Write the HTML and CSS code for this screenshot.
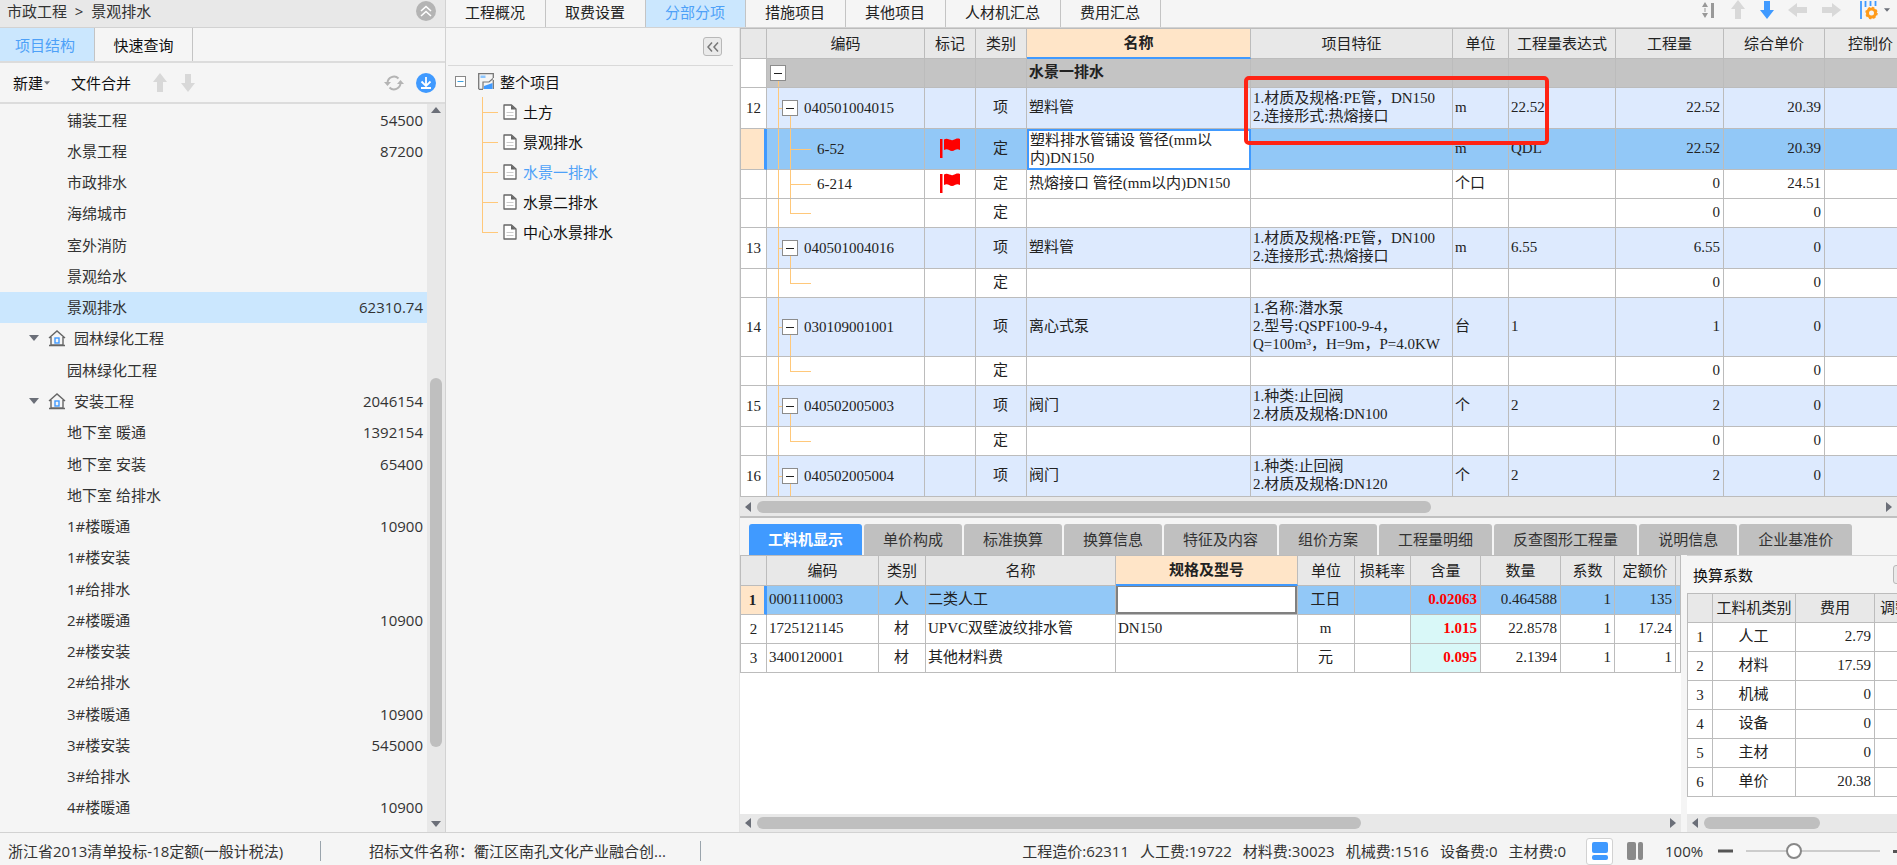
FILE: index.html
```html
<!DOCTYPE html>
<html lang="zh-CN">
<head>
<meta charset="utf-8">
<title>市政工程 - 景观排水</title>
<link rel="stylesheet" href="styles.css">
</head>
<body>
<svg class="defs" aria-hidden="true">
  <symbol id="i-up" viewBox="0 0 16 20"><path d="M8 0 15 9H11V19H5V9H1Z" fill="currentColor"/></symbol>
  <symbol id="i-down" viewBox="0 0 16 20"><path d="M8 19 15 10H11V1H5V10H1Z" fill="currentColor"/></symbol>
  <symbol id="i-left" viewBox="0 0 20 16"><path d="M0 8 9 1V5H19V11H9V15Z" fill="currentColor"/></symbol>
  <symbol id="i-right" viewBox="0 0 20 16"><path d="M20 8 11 1V5H1V11H11V15Z" fill="currentColor"/></symbol>
  <symbol id="i-home" viewBox="0 0 18 18"><path d="M1 9 9 2 17 9M3 8V16H15V8M1 16.5H17" fill="none" stroke="#666" stroke-width="1.4"/><rect x="7" y="9" width="4" height="5" fill="none" stroke="#409aff" stroke-width="1.4"/></symbol>
  <symbol id="i-doc" viewBox="0 0 14 16"><path d="M1 1H8.5L13 5V15H1Z" fill="#fff" stroke="#666" stroke-width="1.3" stroke-linejoin="round"/><path d="M8 1V5.5H13Z" fill="#666"/><path d="M3.5 8.5H10.500M3.500 11.500H10.500" stroke="#ccc"/></symbol>
  <symbol id="i-flag" viewBox="0 0 20 20"><path d="M0 1H2.500V20H0Z" fill="#f00"/><path d="M4 1.500C8-.5 10 3 13 2 16 1 17 0 20 1V12C16 10 15 13 12 13 9 13 8 10 4 12Z" fill="#f00"/></symbol>
  <symbol id="t-left" viewBox="0 0 6 10"><path d="M6 0V10L0 5Z" fill="#6b6f78"/></symbol>
  <symbol id="t-right" viewBox="0 0 6 10"><path d="M0 0V10L6 5Z" fill="#6b6f78"/></symbol>
  <symbol id="t-up" viewBox="0 0 10 6"><path d="M0 6H10L5 0Z" fill="#6b6f78"/></symbol>
  <symbol id="t-down" viewBox="0 0 10 6"><path d="M0 0H10L5 6Z" fill="#6b6f78"/></symbol>
</svg>

<div class="app">
  <aside class="side">
    <div class="crumb"><span>市政工程&nbsp; &gt; &nbsp;景观排水</span>
      <button class="plain" aria-label="收起"><svg width="20" height="20" viewBox="0 0 20 20"><circle cx="10" cy="10" r="10" fill="#b4b4b4"/><path d="M5 10 10 5.500 15 10M5 15 10 10.500 15 15" fill="none" stroke="#fff" stroke-width="1.6"/></svg></button>
    </div>
    <div class="side-tabs">
      <button class="on">项目结构</button><button>快速查询</button>
    </div>
    <div class="side-tools">
      <button class="plain new">新建<svg width="6" height="4"><use href="#t-down"/></svg></button>
      <button class="plain merge">文件合并</button>
      <button class="plain dim" aria-label="上移"><svg width="16" height="20"><use href="#i-up"/></svg></button>
      <button class="plain dim" aria-label="下移"><svg width="16" height="20"><use href="#i-down"/></svg></button>
      <span class="grow"></span>
      <button class="plain refresh" aria-label="刷新"><svg width="20" height="18" viewBox="0 0 20 18"><path d="M3.500 9A6.500 6.500 0 0 1 14.500 4.500M16.500 9A6.500 6.500 0 0 1 5.500 13.500" fill="none" stroke="#b4b4b4" stroke-width="2"/><path d="M0 8H7L3.500 12ZM13 10H20L16.500 6Z" fill="#b4b4b4"/></svg></button>
      <button class="plain" aria-label="下载"><svg width="20" height="20" viewBox="0 0 20 20"><circle cx="10" cy="10" r="10" fill="#409aff"/><path d="M10 4V12M5.500 8.500 10 13 14.500 8.500M5 15H15" fill="none" stroke="#fff" stroke-width="1.8"/></svg></button>
    </div>
    <div class="side-body">
      <ul class="projects">
        <li><span>铺装工程</span><b>54500</b></li>
        <li><span>水景工程</span><b>87200</b></li>
        <li><span>市政排水</span></li>
        <li><span>海绵城市</span></li>
        <li><span>室外消防</span></li>
        <li><span>景观给水</span></li>
        <li class="on"><span>景观排水</span><b>62310.74</b></li>
        <li class="group"><svg width="10" height="6"><use href="#t-down"/></svg><svg width="18" height="18"><use href="#i-home"/></svg><span>园林绿化工程</span></li>
        <li><span>园林绿化工程</span></li>
        <li class="group"><svg width="10" height="6"><use href="#t-down"/></svg><svg width="18" height="18"><use href="#i-home"/></svg><span>安装工程</span><b>2046154</b></li>
        <li><span>地下室 暖通</span><b>1392154</b></li>
        <li><span>地下室 安装</span><b>65400</b></li>
        <li><span>地下室 给排水</span></li>
        <li><span>1#楼暖通</span><b>10900</b></li>
        <li><span>1#楼安装</span></li>
        <li><span>1#给排水</span></li>
        <li><span>2#楼暖通</span><b>10900</b></li>
        <li><span>2#楼安装</span></li>
        <li><span>2#给排水</span></li>
        <li><span>3#楼暖通</span><b>10900</b></li>
        <li><span>3#楼安装</span><b>545000</b></li>
        <li><span>3#给排水</span></li>
        <li><span>4#楼暖通</span><b>10900</b></li>
      </ul>
      <div class="vbar"><svg width="10" height="6"><use href="#t-up"/></svg><span class="before"></span><i></i><span class="after"></span><svg width="10" height="6"><use href="#t-down"/></svg></div>
    </div>
  </aside>

  <main class="main">
    <div class="main-tabs">
      <button>工程概况</button><button>取费设置</button><button class="on">分部分项</button><button>措施项目</button><button>其他项目</button><button>人材机汇总</button><button>费用汇总</button>
      <div class="main-tools">
        <button class="plain" aria-label="行高"><svg width="16" height="18" viewBox="0 0 16 18"><path d="M4 1 7 6H1ZM4 17 7 12H1ZM3.500 7H4.500V11H3.500ZM10 2H13V17H10Z" fill="#999"/></svg></button>
        <button class="plain dim" aria-label="上移"><svg width="16" height="20"><use href="#i-up"/></svg></button>
        <button class="plain blue" aria-label="下移"><svg width="16" height="20"><use href="#i-down"/></svg></button>
        <button class="plain dim" aria-label="左移"><svg width="20" height="16"><use href="#i-left"/></svg></button>
        <button class="plain dim" aria-label="右移"><svg width="20" height="16"><use href="#i-right"/></svg></button>
        <button class="plain cols" aria-label="列设置"><svg width="18" height="20" viewBox="0 0 18 20"><path d="M1 1V19M5.500 1V7M10.500 1V6M15.500 1V6" stroke="#409aff" stroke-width="1.8"/><circle cx="11.500" cy="13" r="4" fill="none" stroke="#ff9b1a" stroke-width="3"/><circle cx="11.500" cy="13" r="5.500" fill="none" stroke="#ff9b1a" stroke-width="1.500" stroke-dasharray="2.300 2"/></svg><svg width="6" height="4"><use href="#t-down"/></svg></button>
      </div>
    </div>

    <div class="split">
      <nav class="outline">
        <div class="outline-head"><button aria-label="收起目录"><svg width="12" height="10" viewBox="0 0 12 10"><path d="M5 0.500 1 5 5 9.500M11 0.500 7 5 11 9.500" fill="none" stroke="#777" stroke-width="1.500"/></svg></button></div>
        <div class="root"><svg width="11" height="11" viewBox="0 0 11 11"><rect x=".5" y=".5" width="10" height="10" fill="#fff" stroke="#888"/><path d="M2.500 5.500H8.500" stroke="#3aa0e0"/></svg>
          <svg width="16" height="17" viewBox="0 0 16 17"><path d="M.7 16V.7H15.300V5M.7 16.300H5M15.300 7V16" fill="none" stroke="#777" stroke-width="1.300"/><rect x="2.500" y="2.500" width="5" height="2.500" fill="#8cc6ff"/><path d="M5 16V9H11L15 5.500" fill="none" stroke="#777" stroke-width="1.200"/><path d="M6 16V13L14.500 10V16Z" fill="#409aff"/></svg><span>整个项目</span></div>
        <ul>
          <li><svg width="14" height="16"><use href="#i-doc"/></svg>土方</li>
          <li><svg width="14" height="16"><use href="#i-doc"/></svg>景观排水</li>
          <li class="on"><svg width="14" height="16"><use href="#i-doc"/></svg>水景一排水</li>
          <li><svg width="14" height="16"><use href="#i-doc"/></svg>水景二排水</li>
          <li><svg width="14" height="16"><use href="#i-doc"/></svg>中心水景排水</li>
        </ul>
      </nav>

      <section class="work">
        <div class="bill">
          <table class="grid">
            <colgroup><col class="w26"><col class="w158"><col class="w51"><col class="w51"><col class="w224"><col class="w202"><col class="w56"><col class="w107"><col class="w108"><col class="w101"><col></colgroup>
            <thead><tr class="h30"><th></th><th>编码</th><th>标记</th><th>类别</th><th class="cur">名称</th><th>项目特征</th><th>单位</th><th>工程量表达式</th><th>工程量</th><th>综合单价</th><th>控制价</th></tr></thead>
            <tbody>
              <tr class="h29 section"><th></th><td class="code top"><div><button class="box" aria-label="折叠"></button></div></td><td></td><td></td><td class="name">水景一排水</td><td></td><td></td><td></td><td></td><td></td><td></td></tr>
              <tr class="h41 item"><th>12</th><td class="code"><div><button class="box" aria-label="折叠"></button>040501004015</div></td><td></td><td class="c">项</td><td>塑料管</td><td class="multi">1.材质及规格:PE管，DN150<br>2.连接形式:热熔接口</td><td>m</td><td>22.52</td><td class="r">22.52</td><td class="r">20.39</td><td></td></tr>
              <tr class="h41 sel"><th></th><td class="code child"><div>6-52</div></td><td class="c"><svg width="20" height="20"><use href="#i-flag"/></svg></td><td class="c">定</td><td class="multi edit">塑料排水管铺设 管径(mm以<br>内)DN150</td><td></td><td>m</td><td>QDL</td><td class="r">22.52</td><td class="r">20.39</td><td></td></tr>
              <tr class="h29"><th></th><td class="code child"><div>6-214</div></td><td class="c"><svg width="20" height="20"><use href="#i-flag"/></svg></td><td class="c">定</td><td>热熔接口 管径(mm以内)DN150</td><td></td><td>个口</td><td></td><td class="r">0</td><td class="r">24.51</td><td></td></tr>
              <tr class="h29"><th></th><td class="code last"></td><td></td><td class="c">定</td><td></td><td></td><td></td><td></td><td class="r">0</td><td class="r">0</td><td></td></tr>
              <tr class="h41 item"><th>13</th><td class="code"><div><button class="box" aria-label="折叠"></button>040501004016</div></td><td></td><td class="c">项</td><td>塑料管</td><td class="multi">1.材质及规格:PE管，DN100<br>2.连接形式:热熔接口</td><td>m</td><td>6.55</td><td class="r">6.55</td><td class="r">0</td><td></td></tr>
              <tr class="h29"><th></th><td class="code last"></td><td></td><td class="c">定</td><td></td><td></td><td></td><td></td><td class="r">0</td><td class="r">0</td><td></td></tr>
              <tr class="h59 item"><th>14</th><td class="code"><div><button class="box" aria-label="折叠"></button>030109001001</div></td><td></td><td class="c">项</td><td>离心式泵</td><td class="multi">1.名称:潜水泵<br>2.型号:QSPF100-9-4，<br>Q=100m³，H=9m，P=4.0KW</td><td>台</td><td>1</td><td class="r">1</td><td class="r">0</td><td></td></tr>
              <tr class="h29"><th></th><td class="code last"></td><td></td><td class="c">定</td><td></td><td></td><td></td><td></td><td class="r">0</td><td class="r">0</td><td></td></tr>
              <tr class="h41 item"><th>15</th><td class="code"><div><button class="box" aria-label="折叠"></button>040502005003</div></td><td></td><td class="c">项</td><td>阀门</td><td class="multi">1.种类:止回阀<br>2.材质及规格:DN100</td><td>个</td><td>2</td><td class="r">2</td><td class="r">0</td><td></td></tr>
              <tr class="h29"><th></th><td class="code last"></td><td></td><td class="c">定</td><td></td><td></td><td></td><td></td><td class="r">0</td><td class="r">0</td><td></td></tr>
              <tr class="h41 item"><th>16</th><td class="code"><div><button class="box" aria-label="折叠"></button>040502005004</div></td><td></td><td class="c">项</td><td>阀门</td><td class="multi">1.种类:止回阀<br>2.材质及规格:DN120</td><td>个</td><td>2</td><td class="r">2</td><td class="r">0</td><td></td></tr>
            </tbody>
          </table>
          <div class="mark"></div>
        </div>
        <div class="hbar bill-bar"><svg width="6" height="10"><use href="#t-left"/></svg><i></i><span class="grow"></span><svg width="6" height="10"><use href="#t-right"/></svg></div>

        <div class="detail-tabs">
          <button class="on">工料机显示</button><button>单价构成</button><button>标准换算</button><button>换算信息</button><button>特征及内容</button><button>组价方案</button><button>工程量明细</button><button>反查图形工程量</button><button>说明信息</button><button>企业基准价</button>
        </div>
        <div class="detail">
          <div class="pane res">
            <div class="scroll">
              <table class="grid">
                <colgroup><col class="w26"><col class="w112"><col class="w47"><col class="w190"><col class="w182"><col class="w57"><col class="w56"><col class="w70"><col class="w80"><col class="w54"><col class="w61"><col></colgroup>
                <thead><tr class="h30"><th></th><th>编码</th><th>类别</th><th>名称</th><th class="cur">规格及型号</th><th>单位</th><th>损耗率</th><th>含量</th><th>数量</th><th>系数</th><th>定额价</th><th></th></tr></thead>
                <tbody>
                  <tr class="h29 sel"><th>1</th><td>0001110003</td><td class="c">人</td><td>二类人工</td><td class="field"><input type="text" aria-label="规格及型号"></td><td class="c">工日</td><td></td><td class="r qty">0.02063</td><td class="r">0.464588</td><td class="r">1</td><td class="r">135</td><td></td></tr>
                  <tr class="h29"><th>2</th><td>1725121145</td><td class="c">材</td><td>UPVC双壁波纹排水管</td><td>DN150</td><td class="c">m</td><td></td><td class="r qty">1.015</td><td class="r">22.8578</td><td class="r">1</td><td class="r">17.24</td><td></td></tr>
                  <tr class="h29"><th>3</th><td>3400120001</td><td class="c">材</td><td>其他材料费</td><td></td><td class="c">元</td><td></td><td class="r qty">0.095</td><td class="r">2.1394</td><td class="r">1</td><td class="r">1</td><td></td></tr>
                </tbody>
              </table>
            </div>
            <div class="hbar res-bar"><svg width="6" height="10"><use href="#t-left"/></svg><i></i><span class="grow"></span><svg width="6" height="10"><use href="#t-right"/></svg></div>
          </div>
          <div class="pane coef">
            <div class="coef-head"><span>换算系数</span><button aria-label="展开"><svg width="12" height="10" viewBox="0 0 12 10"><path d="M1 .5 5 5 1 9.500M7 .5 11 5 7 9.500" fill="none" stroke="#777" stroke-width="1.500"/></svg></button></div>
            <div class="scroll">
              <table class="grid">
                <colgroup><col class="w25"><col class="w83"><col class="w79"><col></colgroup>
                <thead><tr class="h29"><th></th><th>工料机类别</th><th>费用</th><th class="l">调整</th></tr></thead>
                <tbody>
                  <tr class="h29"><th>1</th><td class="c">人工</td><td class="r">2.79</td><td></td></tr>
                  <tr class="h29"><th>2</th><td class="c">材料</td><td class="r">17.59</td><td></td></tr>
                  <tr class="h29"><th>3</th><td class="c">机械</td><td class="r">0</td><td></td></tr>
                  <tr class="h29"><th>4</th><td class="c">设备</td><td class="r">0</td><td></td></tr>
                  <tr class="h29"><th>5</th><td class="c">主材</td><td class="r">0</td><td></td></tr>
                  <tr class="h29"><th>6</th><td class="c">单价</td><td class="r">20.38</td><td></td></tr>
                </tbody>
              </table>
            </div>
            <div class="hbar coef-bar"><svg width="6" height="10"><use href="#t-left"/></svg><i></i></div>
          </div>
        </div>
      </section>
    </div>
  </main>
</div>

<footer class="status">
  <span class="std">浙江省2013清单投标-18定额(一般计税法)</span>
  <span class="file">招标文件名称：衢江区南孔文化产业融合创...</span>
  <div class="totals"><span>工程造价:62311</span><span>人工费:19722</span><span>材料费:30023</span><span>机械费:1516</span><span>设备费:0</span><span>主材费:0</span></div>
  <button class="view on" aria-label="上下布局"><svg width="16" height="18" viewBox="0 0 16 18"><rect width="16" height="11" rx="2" fill="#409aff"/><rect y="13" width="16" height="5" rx="2" fill="#409aff"/></svg></button>
  <button class="view" aria-label="左右布局"><svg width="16" height="18" viewBox="0 0 16 18"><rect width="9" height="18" rx="2" fill="#8a8a8a"/><rect x="11" width="5" height="18" rx="2" fill="#8a8a8a"/></svg></button>
  <label class="zoom" for="zoom">100%</label>
  <button class="plain step" aria-label="缩小"><svg width="15" height="4"><path d="M0 2H15" stroke="#555" stroke-width="3"/></svg></button>
  <input id="zoom" class="slider" type="range" min="0" max="100" value="34">
  <button class="plain step" aria-label="放大"><svg width="15" height="15"><path d="M0 7.500H15M7.500 0V15" stroke="#555" stroke-width="3"/></svg></button>
</footer>
</body>
</html>
```
FILE: styles.css
```css
* { box-sizing: border-box; }
body {
  margin: 0;
  height: 100vh;
  display: flex;
  flex-direction: column;
  overflow: hidden;
  background: #f5f5f5;
  color: #333;
  font: 15px/20px "Open Sans", "Noto Sans CJK SC", sans-serif;
}
button, input { font: inherit; color: inherit; margin: 0; }
button { border: 0; padding: 0; background: none; white-space: nowrap; }
svg { display: block; flex: none; }
ul { list-style: none; margin: 0; padding: 0; }
.defs { width: 0; height: 0; position: absolute; }
.grow { flex: 1; }
.plain { display: flex; align-items: center; }
.dim { color: #d8d8d8; }
.blue { color: #409aff; }

.app { flex: 1; min-height: 0; display: flex; }

/* project sidebar */
.side {
  flex: none;
  width: 446px;
  display: flex;
  flex-direction: column;
  border-right: 1px solid #d2d2d2;
}
.crumb {
  height: 28px;
  padding: 0 9px 6px 7px;
  display: flex;
  justify-content: space-between;
  align-items: center;
  background: #e8e8e8;
  border-bottom: 1px solid #d2d2d2;
}
.side-tabs {
  height: 35px;
  display: flex;
  border-bottom: 2px solid #dcdcdc;
}
.side-tabs button { width: 98px; border-right: 1px solid #c4c4c4; color: #111; }
.side-tabs .on { width: 95px; padding-right: 4px; background: #cbe7fe; color: #4ea1f8; }
.side-tools {
  height: 41px;
  padding: 0 9px 0 13px;
  display: flex;
  align-items: center;
  color: #111;
  border-bottom: 2px solid #dcdcdc;
}
.new { gap: 1px; }
.merge { margin: 0 21px; }
.side-tools .dim + .dim { margin-left: 12px; }
.refresh { margin-right: 12px; }
.side-body { flex: 1; min-height: 0; display: flex; }
.projects { flex: 1; display: flex; flex-direction: column; padding-bottom: 9px; }
.projects li {
  flex: 1;
  display: flex;
  align-items: center;
  padding: 0 4px 0 67px;
}
.projects .group { padding-left: 29px; }
.group svg + svg { margin: 0 8px 0 9px; }
.projects b { margin-left: auto; font-weight: 400; }
.projects .on { background: #cbe7fe; }
.vbar {
  width: 18px;
  padding: 3px 0 5px;
  display: flex;
  flex-direction: column;
  align-items: center;
  background: #e8e8e8;
}
.vbar i { width: 12px; flex: 369; border-radius: 6px; background: #bfbfbf; }
.vbar .before { flex: 265; }
.vbar .after { flex: 74; }

/* main area */
.main { flex: 1; min-width: 0; display: flex; flex-direction: column; }
.main-tabs { height: 28px; display: flex; border-bottom: 1px solid #d2d2d2; }
.main-tabs > button {
  padding: 0 20px 4px 19px;
  border-right: 1px solid #c4c4c4;
  color: #222;
}
.main-tabs > .on { background: #cbe7fe; color: #4ea1f8; }
.main-tools {
  margin-left: auto;
  padding: 0 7px 7px 0;
  display: flex;
  align-items: center;
  gap: 13px;
}
.cols { gap: 6px; margin-left: 6px; }
.split { flex: 1; min-height: 0; display: flex; }

.outline { flex: none; width: 294px; padding: 0 6px 0 2px; border-right: 1px solid #e4e4e4; }
.outline-head {
  height: 38px;
  display: flex;
  justify-content: flex-end;
  align-items: center;
  padding-right: 11px;
  border-bottom: 1px solid #d9d9d9;
}
.outline-head button, .coef-head button {
  width: 19px;
  height: 19px;
  display: flex;
  flex: none;
  align-items: center;
  justify-content: center;
  border: 1px solid #b8b8b8;
  border-radius: 3px;
  background: #eaeaea;
}
.root { height: 31px; padding-left: 7px; display: flex; align-items: center; color: #111; }
.root svg + svg { margin: 0 6px 0 12px; }
.outline ul { margin-left: 34px; }
.outline li {
  height: 30px;
  padding-left: 21px;
  display: flex;
  align-items: center;
  gap: 6px;
  color: #111;
  background:
    linear-gradient(#ffc87a, #ffc87a) 0 0 / 1px 100% no-repeat,
    linear-gradient(#ffc87a, #ffc87a) 0 50% / 16px 1px no-repeat;
}
.outline li:last-child {
  background:
    linear-gradient(#ffc87a, #ffc87a) 0 0 / 1px 50% no-repeat,
    linear-gradient(#ffc87a, #ffc87a) 0 50% / 16px 1px no-repeat;
}
.outline .on { color: #4ea1f8; }

/* data grids */
.work { flex: 1; min-width: 0; display: flex; flex-direction: column; }
.grid {
  width: 100%;
  table-layout: fixed;
  border-collapse: separate;
  border-spacing: 0;
  background: #fff;
  border: solid #bcbcbc;
  border-width: 1px 0 0 1px;
  color: #222;
  font-family: "Liberation Serif", "Noto Sans CJK SC", serif;
}
.grid th, .grid td {
  padding: 0 3px 2px 2px;
  border: solid #bcbcbc;
  border-width: 0 1px 1px 0;
  text-align: left;
  font-weight: 400;
  white-space: nowrap;
  overflow: hidden;
}
.grid th { text-align: center; padding: 0; }
.grid .l { text-align: left; padding-left: 5px; }
.grid thead th { background: #e8e8e8; }
.grid thead .cur { background: #ffe5c8; font-weight: 700; border-bottom: 2px solid #409aff; }
.grid .c { text-align: center; }
.grid td.c svg { margin: 0 auto; }
.grid .r { text-align: right; }
.grid .multi { line-height: 18px; }
.h29 { height: 29px; }
.h30 { height: 30px; }
.h41 { height: 41px; }
.h59 { height: 59px; }
.item td { background-color: #ddeafe; }
.sel td { background-color: #92c8f7; }
.sel th { background: #ffe5c8; }
.grid .sel th { border-right: 3px solid #409aff; font-weight: 700; }
.section td { background-color: #c4c4c4; }
.grid .section .name { font-weight: 700; }
.grid .edit { background: #fff; border: 2px solid #409aff; padding: 0 0 1px 1px; }
.grid .qty { color: #f00; font-weight: 700; background-color: #d9f8f8; }
.grid .sel .qty { background-color: #92c8f7; }
.grid .field { padding: 0; }
.field input {
  display: block;
  width: 100%;
  height: 28px;
  padding: 0 2px;
  border: 2px solid #808080;
  border-top-width: 1px;
  background: #fff;
}

/* tree guides in the code column */
.grid .code {
  padding: 0;
  background-image:
    linear-gradient(#ffc87a, #ffc87a),
    linear-gradient(#ffc87a, #ffc87a),
    linear-gradient(#ffc87a, #ffc87a);
  background-repeat: no-repeat;
  background-position: 11px 0, 11px 50%, 23px 100%;
  background-size: 1px 100%, 8px 1px, 1px 50%;
}
.grid .top { background-size: 1px 50%, 0 0, 0 0; background-position: 11px 100%, 0 0, 0 0; }
.grid .child { background-size: 1px 100%, 21px 1px, 1px 100%; background-position: 11px 0, 23px 50%, 23px 0; }
.grid .last { background-size: 1px 100%, 21px 1px, 1px 50%; background-position: 11px 0, 23px 50%, 23px 0; }
.code div { display: flex; align-items: center; gap: 6px; padding-left: 15px; }
.top div { padding-left: 3px; }
.child div { padding-left: 50px; }
.box {
  width: 16px;
  height: 16px;
  border: 1px solid #8c8c8c;
  background: linear-gradient(#222, #222) 50% 50% / 8px 1px no-repeat #fff;
}

.w25 { width: 25px; } .w26 { width: 26px; } .w47 { width: 47px; }
.w51 { width: 51px; } .w54 { width: 54px; } .w56 { width: 56px; }
.w57 { width: 57px; } .w61 { width: 61px; } .w70 { width: 70px; }
.w79 { width: 79px; } .w80 { width: 80px; } .w83 { width: 83px; }
.w101 { width: 101px; } .w107 { width: 107px; } .w108 { width: 108px; }
.w112 { width: 112px; } .w158 { width: 158px; } .w182 { width: 182px; }
.w190 { width: 190px; } .w202 { width: 202px; } .w224 { width: 224px; }

.bill { position: relative; overflow: hidden; }
.bill .grid { width: calc(100% + 20px); }
.mark {
  position: absolute;
  left: 504px;
  top: 48px;
  width: 305px;
  height: 69px;
  border: 4px solid #ff2314;
  border-radius: 5px;
}
.hbar {
  height: 18px;
  flex: none;
  display: flex;
  align-items: center;
  gap: 6px;
  padding: 0 5px;
  background: #e8e8e8;
}
.hbar i { height: 12px; border-radius: 6px; background: #bfbfbf; }
.bill-bar { height: 21px; border-bottom: 2px solid #c0c0c0; }
.bill-bar i { flex: 0 1 674px; }
.res-bar i { flex: 0 1 604px; }
.coef-bar i { flex: 0 1 116px; }

.detail-tabs { height: 37px; flex: none; display: flex; gap: 2px; padding: 6px 0 0 9px; }
.detail-tabs button {
  padding: 0 19px 1px;
  background: #c0c0c0;
  border-radius: 3px 3px 0 0;
  color: #333;
}
.detail-tabs .on { background: #409aff; color: #fff; font-weight: 700; }
.detail { flex: 1; min-height: 0; display: flex; gap: 6px; }
.pane { display: flex; flex-direction: column; min-width: 0; overflow: hidden; }
.res { flex: 1; }
.coef { flex: none; width: 210px; }
.scroll { flex: 1; min-height: 0; overflow: hidden; background: #fff; }
.coef .grid { width: 240px; }
.coef-head {
  height: 38px;
  flex: none;
  display: flex;
  align-items: center;
  padding-left: 6px;
  color: #111;
  border-top: 1px solid #d2d2d2;
}
.coef-head span { width: 200px; flex: none; }

/* status bar */
.status {
  height: 33px;
  flex: none;
  display: flex;
  align-items: center;
  padding-top: 4px;
  overflow: hidden;
  border-top: 1px solid #d2d2d2;
}
.status span { white-space: nowrap; }
.std { width: 321px; padding-left: 8px; border-right: 1px solid #9aa4ac; }
.file { width: 380px; padding-left: 48px; border-right: 1px solid #9aa4ac; }
.totals { margin-left: auto; display: flex; gap: 11px; }
.view {
  width: 27px;
  height: 27px;
  margin-left: 8px;
  display: flex;
  flex: none;
  align-items: center;
  justify-content: center;
  border: 1px solid transparent;
  border-radius: 3px;
}
.view.on { margin-left: 20px; border-color: #d2d2d2; background: #fff; }
.zoom { width: 53px; margin-left: 17px; }
.step { width: 15px; flex: none; }
.slider {
  width: 134px;
  height: 18px;
  flex: none;
  margin: 0 13px;
  appearance: none;
  background: linear-gradient(#ccc, #ccc) 0 50% / 100% 2px no-repeat;
}
.slider::-webkit-slider-thumb {
  appearance: none;
  width: 16px;
  height: 16px;
  border: 2px solid #888;
  border-radius: 50%;
  background: #fff;
}
.status .step:last-child { margin-right: -11px; }
```
